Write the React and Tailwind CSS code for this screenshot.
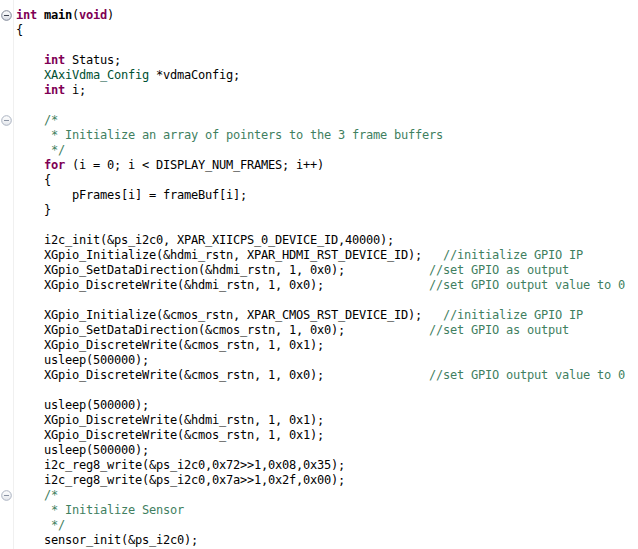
import React from 'react';

// token kinds -> tailwind classes
const kinds = {
  t: 'text-black',
  k: 'text-[#7f0055] font-bold',
  b: 'text-black font-bold',
  ty: 'text-[#005032]',
  c: 'text-[#3f7f5f]',
};

const k = (s) => ['k', s];
const c = (s) => ['c', s];

// each line is a list of tokens; plain strings are normal text
const lines = [
  { fold: 'dark', toks: [k('int'), ' ', ['b', 'main'], '(', k('void'), ')'] },
  { toks: ['{'] },
  { toks: [] },
  { toks: ['    ', k('int'), ' Status;'] },
  { toks: ['    ', ['ty', 'XAxiVdma_Config'], ' *vdmaConfig;'] },
  { toks: ['    ', k('int'), ' i;'] },
  { toks: [] },
  { fold: 'light', toks: ['    ', c('/*')] },
  { toks: ['    ', c(' * Initialize an array of pointers to the 3 frame buffers')] },
  { toks: ['    ', c(' */')] },
  { toks: ['    ', k('for'), ' (i = 0; i < DISPLAY_NUM_FRAMES; i++)'] },
  { toks: ['    {'] },
  { toks: ['        pFrames[i] = frameBuf[i];'] },
  { toks: ['    }'] },
  { toks: [] },
  { toks: ['    i2c_init(&ps_i2c0, XPAR_XIICPS_0_DEVICE_ID,40000);'] },
  { toks: ['    XGpio_Initialize(&hdmi_rstn, XPAR_HDMI_RST_DEVICE_ID);   ', c('//initialize GPIO IP')] },
  { toks: ['    XGpio_SetDataDirection(&hdmi_rstn, 1, 0x0);            ', c('//set GPIO as output')] },
  { toks: ['    XGpio_DiscreteWrite(&hdmi_rstn, 1, 0x0);               ', c('//set GPIO output value to 0')] },
  { toks: [] },
  { toks: ['    XGpio_Initialize(&cmos_rstn, XPAR_CMOS_RST_DEVICE_ID);   ', c('//initialize GPIO IP')] },
  { toks: ['    XGpio_SetDataDirection(&cmos_rstn, 1, 0x0);            ', c('//set GPIO as output')] },
  { toks: ['    XGpio_DiscreteWrite(&cmos_rstn, 1, 0x1);'] },
  { toks: ['    usleep(500000);'] },
  { toks: ['    XGpio_DiscreteWrite(&cmos_rstn, 1, 0x0);               ', c('//set GPIO output value to 0')] },
  { toks: [] },
  { toks: ['    usleep(500000);'] },
  { toks: ['    XGpio_DiscreteWrite(&hdmi_rstn, 1, 0x1);'] },
  { toks: ['    XGpio_DiscreteWrite(&cmos_rstn, 1, 0x1);'] },
  { toks: ['    usleep(500000);'] },
  { toks: ['    i2c_reg8_write(&ps_i2c0,0x72>>1,0x08,0x35);'] },
  { toks: ['    i2c_reg8_write(&ps_i2c0,0x7a>>1,0x2f,0x00);'] },
  { fold: 'light', toks: ['    ', c('/*')] },
  { toks: ['    ', c(' * Initialize Sensor')] },
  { toks: ['    ', c(' */')] },
  { toks: ['    sensor_init(&ps_i2c0);'] },
];

// the little "collapse" circle in the gutter
const FoldIcon = ({ dark }) => (
  <svg width="11" height="11" viewBox="0 0 11 11">
    <defs>
      <linearGradient id={dark ? 'fd' : 'fl'} x1="0" y1="0" x2="0" y2="1">
        <stop offset="0" stopColor="#ffffff" />
        <stop offset="1" stopColor={dark ? '#d8dce4' : '#e4e7ec'} />
      </linearGradient>
    </defs>
    <circle
      cx="5.5"
      cy="5.5"
      r="4.8"
      fill={`url(#${dark ? 'fd' : 'fl'})`}
      stroke={dark ? '#7c8494' : '#aab2c0'}
      strokeWidth="1"
    />
    <line x1="3" y1="5.5" x2="8" y2="5.5" stroke={dark ? '#3c4350' : '#8a93a3'} strokeWidth="1" />
  </svg>
);

export default function App() {
  return (
    <div className="flex min-h-screen w-[638px] h-[549px] overflow-hidden bg-white font-['DejaVu_Sans_Mono',monospace] text-[12px] tracking-[-0.224px]">
      {/* gutter with fold markers */}
      <div className="w-[14px] shrink-0 border-r border-[#f0f0f0] pt-[8px]">
        {lines.map((ln, i) => (
          <div key={i} className="h-[15px] flex items-center pl-[1px]">
            {ln.fold && <FoldIcon dark={ln.fold === 'dark'} />}
          </div>
        ))}
      </div>

      {/* code */}
      <div className="pl-[2px] pt-[8px]">
        {lines.map((ln, i) => (
          <div key={i} className="h-[15px] leading-[15px] whitespace-pre">
            {ln.toks.map((tok, j) =>
              typeof tok === 'string' ? (
                <span key={j} className={kinds.t}>{tok}</span>
              ) : (
                <span key={j} className={kinds[tok[0]]}>{tok[1]}</span>
              )
            )}
          </div>
        ))}
      </div>
    </div>
  );
}
